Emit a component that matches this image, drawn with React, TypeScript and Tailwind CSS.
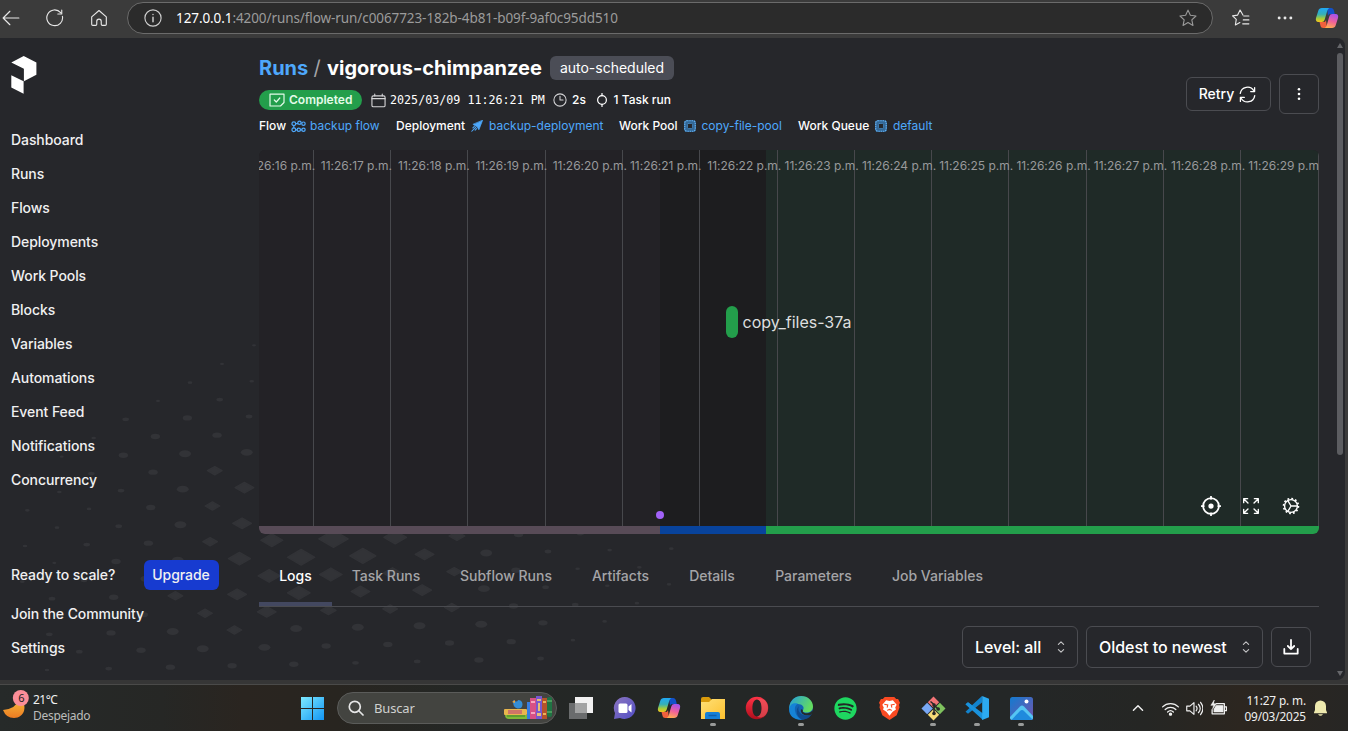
import React from "react";
import { FaSpotify } from "react-icons/fa";

const dotRows: [number, number, number[]][] = [
  [762, 1036, [6]],
  [666, 1092, [6]],
  [570, 1148, [7, 7]],
  [474, 1203, [6, 10]],
  [377, 1258, [10, 14, 10]],
  [281, 1314, [7, 14, 14]],
  [185, 1370, [6, 14, 18, 18]],
  [89, 1425, [5, 10, 14, 24]],
  [178, 1476, [7, 10, 18, 30]],
  [82, 1531, [7, 7, 14, 24]],
  [171, 1583, [7, 10, 18, 30]],
  [75, 1638, [7, 10, 14, 24, 35, 46, 36, 26, 14, 12]],
  [163, 1689, [6, 14, 18, 35, 43, 41, 30, 18, 10, 7, 7]],
  [67, 1745, [7, 10, 16, 24, 35, 36, 30, 24, 14, 7, 7]],
  [156, 1796, [10, 14, 24, 30, 36, 30, 30, 18, 10, 7, 7]],
  [430, 1844, [14, 24, 30, 25, 24, 24, 14, 10, 7]],
  [148, 1903, [10, 14, 18, 24, 18, 18, 18, 18, 14, 7]],
  [238, 1955, [10, 14, 18, 18, 14, 14, 14, 14, 7]],
  [141, 2010, [7, 10, 14, 14, 14, 10, 10, 14, 10]],
];

function Pattern() {
  return (
    <svg className="absolute left-0 top-0" width="700" height="642" viewBox="0 114 2100 1926" fill="#323337">
      {dotRows.map(([x, y, sizes]) =>
        sizes.map((w, i) => {
          const cx = x + i * 185.1;
          const cy = y - i * 4.3;
          if (w < 22) return <ellipse key={cx} cx={cx} cy={cy} rx={w} ry={w * 0.58} />;
          const h = w * 0.6;
          return <path key={cx} strokeLinejoin="round" stroke="#323337" strokeWidth="4" d={`M${cx - w + 2} ${cy}L${cx} ${cy - h + 2}L${cx + w - 2} ${cy}L${cx} ${cy + h - 2}Z`} />;
        }),
      )}
    </svg>
  );
}

type IconProps = { size?: number; sw?: number; className?: string; children: React.ReactNode };
function Icon({ size = 16, sw = 1.2, className = "", children }: IconProps) {
  return (
    <svg width={size} height={size} viewBox="0 0 16 16" fill="none" stroke="currentColor" strokeWidth={sw} strokeLinecap="round" strokeLinejoin="round" className={`shrink-0 ${className}`}>
      {children}
    </svg>
  );
}

function Copilot({ id, size = 24 }: { id: string; size?: number }) {
  return (
    <svg width={size} height={size} viewBox="0 0 24 24" className="shrink-0">
      <defs>
        <linearGradient id={`${id}a`} x1="0" y1="0" x2="0" y2="1">
          <stop offset="0" stopColor="#20a8f4" />
          <stop offset=".45" stopColor="#35b0b8" />
          <stop offset=".75" stopColor="#a5cc3c" />
          <stop offset="1" stopColor="#f7c51c" />
        </linearGradient>
        <linearGradient id={`${id}b`} x1="0.6" y1="0" x2="0.3" y2="1">
          <stop offset="0" stopColor="#a653ec" />
          <stop offset=".5" stopColor="#f0609b" />
          <stop offset="1" stopColor="#ffae50" />
        </linearGradient>
      </defs>
      <path d="M12 2h4.2c1.5 0 2.3 1 2.7 2.3L19.8 8H16c-1.600-.3-2.500.4-3 2z" fill="#1251c9" />
      <path d="M12 22H8.200c-1.500 0-2.300-1-2.700-2.300L4.500 16H8c1.600.3 2.500-.4 3-2z" fill="#f0603c" />
      <path d="M7 2h7.500c-1.300.5-1.800 1.500-2.300 3L9.700 13.500C9.200 15.200 8.200 16 6.700 16H3.500C1 16 .5 14.200 1 12L3.300 4.800C3.800 3 5 2 7 2z" fill={`url(#${id}a)`} />
      <path d="M17 22H9.500c1.300-.5 1.800-1.500 2.300-3l2.500-8.500c.5-1.700 1.500-2.500 3-2.500h3.200c2.500 0 3 1.800 2.500 4l-2.300 7.200C20.200 21 19 22 17 22z" fill={`url(#${id}b)`} />
    </svg>
  );
}

function BrowserBar() {
  return (
    <header className="flex h-[38px] items-start bg-[#3b3b3b] text-[#e8e8e8]">
      <div className="flex h-9 w-[127px] items-center">
        <Icon size={18} sw={1} className="ml-[2px]"><path d="M15 8H1M7 2L1 8l6 6" /></Icon>
        <Icon size={18} sw={1} className="ml-[26px]"><path d="M14.600 6.500A7 7 0 1 1 13 3.200M14 1v3.400h-3.500" /></Icon>
        <Icon size={18} sw={1} className="ml-[26px]"><path d="M1.500 7L8 1.300 14.500 7v6.500q0 1-1 1H11q-1 0-1-1V11q0-2-2-2t-2 2v2.500q0 1-1 1H2.500q-1 0-1-1z" /></Icon>
      </div>
      <div className="mt-[2px] flex h-8 w-[1086px] items-center rounded-full border border-[#6b6b6b] bg-[#2b2b2b]">
        <Icon size={18} sw={1} className="ml-4 text-[#cfcfcf]"><circle cx="8" cy="8" r="7.200" /><path d="M8 7.300v4M8 4.800v.1" strokeWidth="1.300" /></Icon>
        <span className="ml-[14px] font-['Noto_Sans','Open_Sans',sans-serif] text-[13.500px] tracking-[-0.085px] text-[#9b9b9b]"><span className="text-white">127.0.0.1</span>:4200/runs/flow-run/c0067723-182b-4b81-b09f-9af0c95dd510</span>
        <Icon size={18} sw={1} className="ml-auto mr-[15px] text-[#999]"><path d="M8 1l2.100 4.600 5 .6-3.700 3.400 1 5L8 12.100l-4.400 2.500 1-5L.9 6.200l5-.6z" /></Icon>
      </div>
      <div className="flex h-9 flex-1 items-center">
        <Icon size={18} sw={1} className="ml-[19px]"><path d="M9.700 5.400L7.200.9 5 5.400l-4.500.7 3.300 3.200-.8 4.900L7 12M10.500 6.200h4.500M10 9.700h5M9.500 13.200h5.500" /></Icon>
        <Icon size={18} sw={0} className="ml-[26px]"><g fill="currentColor"><circle cx="2.800" cy="8" r="1.300" /><circle cx="8" cy="8" r="1.300" /><circle cx="13.200" cy="8" r="1.300" /></g></Icon>
        <span className="ml-[21px]"><Copilot id="top" size={24} /></span>
      </div>
    </header>
  );
}

const nav = ["Dashboard", "Runs", "Flows", "Deployments", "Work Pools", "Blocks", "Variables", "Automations", "Event Feed", "Notifications", "Concurrency"];

function Sidebar() {
  return (
    <aside className="relative flex w-[259px] shrink-0 flex-col pl-[11px] text-[14px] font-medium tracking-[-0.080px] text-[#f0f0f1]">
      <svg className="mt-[18px]" width="26" height="38" viewBox="0 0 26 38" fill="#fff"><path d="M.3 6.500L12.700.1l12.700 6.400v12.300l-12.500 6.500V12.700zM.3 19.200L12.600 25.300v12.400L.3 31.500z" /></svg>
      <nav className="mt-[29px] flex flex-col">
        {nav.map((n) => <a key={n} className="flex h-[34px] items-center pb-0.5">{n}</a>)}
      </nav>
      <div className="mt-[63px] flex h-[30px] items-center justify-between pr-10">
        <span className="pb-0.5">Ready to scale?</span>
        <button className="h-[30px] w-[75px] rounded-md bg-[#173bd0] pb-0.5 pr-px text-[14px] font-medium">Upgrade</button>
      </div>
      <a className="mt-[7px] flex h-[34px] items-center pb-0.5">Join the Community</a>
      <a className="flex h-[34px] items-center pb-0.5">Settings</a>
    </aside>
  );
}

function Heading() {
  return (
    <div className="flex h-[112px] justify-between">
      <div className="flex flex-col">
        <div className="mt-[18px] flex h-6 items-center text-[20px] font-bold leading-6">
          <span className="w-12 text-[#4ea8fb]">Runs</span>
          <span className="w-5 text-center font-normal text-[#a5a5a8]">/</span>
          <h1 className="w-[223px] whitespace-nowrap">vigorous-chimpanzee</h1>
          <span className="flex h-6 w-[124px] items-center justify-center rounded-md bg-[#4b4d56] text-[14px] font-normal">auto-scheduled</span>
        </div>
        <div className="mt-[10px] flex h-5 items-center text-[12px] font-medium">
          <span className="flex h-5 w-[103px] items-center rounded-full bg-[#239e4b] pl-[10px] font-semibold text-[#e3fbe9]">
            <Icon size={16} sw={1.200} className="mr-1"><path d="M1 2.200h14v8.300L11.500 14H1z" /><path d="M5.300 8l2 2 3.500-4" /></Icon>
            Completed
          </span>
          <Icon size={15} sw={1.200} className="ml-[9px] text-[#d5d5d7]"><rect x="1" y="3" width="14" height="11.700" rx="1.500" /><path d="M1 6h14M4 1.200V3M12 1.200V3" /></Icon>
          <span className="ml-[4px] w-[163px] whitespace-nowrap pt-px font-['DejaVu_Sans_Mono',monospace] text-[11.700px] font-normal">2025/03/09 11:26:21 PM</span>
          <Icon size={14} sw={1.200} className="text-[#d5d5d7]"><circle cx="8" cy="8" r="7" /><path d="M8 3.800V8h3.500" /></Icon>
          <span className="ml-[5px] w-[23px]">2s</span>
          <Icon size={14} sw={1.400}><circle cx="8" cy="8" r="5" /><path d="M8 .5V3M8 13v2.500" /></Icon>
          <span className="ml-[4.500px]">1 Task run</span>
        </div>
        <div className="mt-[6px] flex h-5 items-center text-[12px] font-medium">
          <span className="w-[32px]">Flow</span>
          <Icon size={15} sw={1.300} className="text-[#4ea8fb]"><circle cx="3" cy="5" r="2" /><circle cx="9" cy="4" r="1.800" /><circle cx="13.300" cy="5" r="1.800" /><circle cx="3" cy="11.500" r="2" /><circle cx="8.300" cy="11.500" r="1.800" /><circle cx="13.300" cy="11.500" r="1.800" /><path d="M5 5h2.200M3 7v2.500M5 11.500h1.500M10.200 11.500h1.300" /></Icon>
          <span className="ml-1 w-[86px] font-normal text-[#4ea8fb]">backup flow</span>
          <span className="w-[75px]">Deployment</span>
          <Icon size={12} sw={1} className="text-[#4ea8fb]"><path d="M15.300.7L10.500 13 8.200 9 3 6z" fill="currentColor" /><path d="M6.500 9.500L1 15M4.500 8.500L2.500 10.500M7.500 11.500l-2 2" strokeWidth="1.400" /></Icon>
          <span className="ml-[6px] w-[130px] whitespace-nowrap font-normal text-[#4ea8fb]">backup-deployment</span>
          <span className="w-[65px] whitespace-nowrap">Work Pool</span>
          <Pool />
          <span className="ml-[5.500px] w-[96.500px] whitespace-nowrap font-normal text-[#4ea8fb]">copy-file-pool</span>
          <span className="w-[77px] whitespace-nowrap">Work Queue</span>
          <Pool />
          <span className="ml-[6px] font-normal text-[#4ea8fb]">default</span>
        </div>
      </div>
      <div className="mt-9 flex items-start gap-2">
        <button className="mt-[3px] flex h-[34px] w-[85px] items-center justify-center gap-[5px] rounded-md border border-[#4b4c51] pr-0.5 text-[14px] font-medium"><span className="pb-0.5">Retry</span>
          <Icon size={17} sw={1.200}><path d="M1.200 7A6.900 6.900 0 0 1 14 4.500M14.800 9A6.900 6.900 0 0 1 2 11.500M14.700 1.500v3.700h-3.700M1.300 14.500v-3.700H5" /></Icon>
        </button>
        <button className="flex size-10 items-center justify-center rounded-md border border-[#4b4c51]">
          <Icon size={16} sw={0}><g fill="currentColor"><circle cx="8" cy="3.200" r="1.300" /><circle cx="8" cy="8" r="1.300" /><circle cx="8" cy="12.800" r="1.300" /></g></Icon>
        </button>
      </div>
    </div>
  );
}

function Pool() {
  return <Icon size={12} sw={1.600} className="text-[#62b2f5]"><rect x="1" y="1" width="14" height="14" rx="3" fill="#336796" stroke="#336796" /><rect x="1" y="1" width="14" height="14" rx="3" strokeLinecap="butt" strokeDasharray="2 1" /><rect x="4.700" y="4.700" width="6.600" height="6.600" rx="1" fill="#26272b" stroke="#4a8cc4" strokeWidth="1" /></Icon>;
}

function Timeline() {
  const secs = Array.from({ length: 14 }, (_, i) => 16 + i);
  return (
    <section className="relative flex h-[384px] w-[1060px] flex-col overflow-hidden rounded-md bg-[#232226]">
      <div className="flex h-[376px]">
        <div className="w-[401px] bg-[#232226]" />
        <div className="w-[106px] bg-[#1d1d1f]" />
        <div className="flex-1 bg-[#1f2a27]" />
      </div>
      <div className="flex h-2">
        <div className="w-[401px] bg-[#584b57]" />
        <div className="w-[106px] bg-[#08439c]" />
        <div className="flex-1 bg-[#239e4b]" />
      </div>
      <div className="absolute left-[-22.500px] top-0 flex h-[376px]">
        {secs.map((s) => (
          <div key={s} className="w-[77.300px] shrink-0 whitespace-nowrap border-r border-[#47484c] pt-[9px] text-[12px] leading-[14px] text-[#98999b]">
            <span className="ml-[7px] tracking-[-0.020px]">11:26:{s} p.m.</span>
          </div>
        ))}
      </div>
      <div className="absolute left-[467px] top-[156px] flex items-center text-[16px] text-[#dedfdf]">
        <span className="mr-[4.500px] h-8 w-[12px] rounded-full bg-[#239e4b]" />copy_files-37a
      </div>
      <span className="absolute left-[397px] top-[361px] size-2 rounded-full bg-[#a262f8]" />
      <div className="absolute bottom-[18px] right-[19px] flex items-center text-white">
        <Icon size={20} sw={1.400}><circle cx="8" cy="8" r="6.300" /><circle cx="8" cy="8" r="1.400" fill="currentColor" /><path d="M8 .3v2M8 13.700v2M.3 8h2M13.700 8h2" /></Icon>
        <Icon size={18} sw={1.200} className="ml-[21px]"><path d="M1.500 5V1.500H5M1.500 1.500l3.800 3.800M11 1.500h3.500V5M14.500 1.500l-3.800 3.800M1.500 11v3.500H5M1.500 14.500l3.800-3.800M14.500 11v3.500H11M14.500 14.500l-3.800-3.800" /></Icon>
        <Icon size={18} sw={1.200} className="ml-[22px]"><circle cx="8" cy="8" r="5.700" /><circle cx="8" cy="8" r="6.600" strokeWidth="1.500" strokeDasharray="1.600 1.860" strokeLinecap="butt" /><path d="M8 8h5.500M8 8L5.200 3.200M8 8l-2.800 4.800" /></Icon>
      </div>
    </section>
  );
}

const tabs: [string, string][] = [["Logs", "w-[73px]"], ["Task Runs", "w-[108px]"], ["Subflow Runs", "w-[132px]"], ["Artifacts", "w-[97px]"], ["Details", "w-[86px]"], ["Parameters", "w-[117px]"], ["Job Variables", "w-[131px]"]];

function Updown() {
  return <Icon size={14} sw={1.300} className="text-[#c4c4c6]"><path d="M5 5L8 2.200 11 5M5 11l3 2.800L11 11" /></Icon>;
}

function Tabs() {
  return (
    <>
      <div className="mt-3 flex h-[61px] w-[1060px] border-b border-[#4a4b50] text-[14px] font-medium text-[#a4a4a7]">
        {tabs.map(([t, w], i) => (
          <div key={t} className={`${w} flex h-[60px] items-center justify-center whitespace-nowrap ${i === 0 ? "border-b-4 border-[#434860] pt-0.5 text-white" : "pb-0.5"}`}>{t}</div>
        ))}
      </div>
      <div className="mt-[19px] flex w-[1052px] items-center justify-end gap-2 text-[16px] font-medium tracking-[-0.040px]">
        <div className="flex h-[42px] w-[116px] items-center justify-between whitespace-nowrap rounded-md border border-[#4b4c51] pl-3 pr-[9px]">Level: all<Updown /></div>
        <div className="flex h-[42px] w-[177px] items-center justify-between whitespace-nowrap rounded-md border border-[#4b4c51] pl-3 pr-[9px]">Oldest to newest<Updown /></div>
        <div className="flex size-10 items-center justify-center rounded-md border border-[#4b4c51] pr-px"><Icon size={16} sw={1.800}><path d="M8 1v9M4.800 7L8 10.200 11.200 7M1.300 10v4.600h13.400V10" /></Icon></div>
      </div>
    </>
  );
}

function WindowsLogo() {
  return (
    <svg width="24" height="24" viewBox="0 0 24 24"><defs><linearGradient id="win" x2="1" y2="1"><stop stopColor="#7eeaff" /><stop offset="1" stopColor="#1295f4" /></linearGradient></defs><path fill="url(#win)" d="M1 1h11v11H1zM13 1h11v11H13zM1 13h11v11H1zM13 13h11v11H13z" /></svg>
  );
}

function Books() {
  return (
    <svg width="50" height="24" viewBox="0 0 50 24">
      <path d="M1 19h22v4H5q-4 0-4-4z" fill="#7fb936" /><path d="M3 19.500h18v1H3z" fill="#407f31" />
      <rect y="13" width="23" height="6" rx="1" fill="#e9b64d" /><rect x="4" y="14" width="14" height="4" fill="#cf7567" />
      <path d="M9 4q4 3 5 0 4 0 4.500 4 0 5-5 4.500-5-1-4.500-8.500z" fill="#348ed6" /><path d="M8 6l3-2v3z" fill="#eea43e" />
      <rect x="23" y="6" width="3.500" height="17" fill="#367de0" /><rect x="26" y="2" width="6" height="21" fill="#d74f85" /><rect x="27" y="5" width="4" height="2" fill="#f5a4bf" /><rect x="27" y="16" width="4" height="2" fill="#f5a4bf" />
      <rect x="32" width="6" height="23" fill="#7858d0" /><path d="M33 3h4v2h-4zM33 17h4v3h-4zM34 7h2v8h-2z" fill="#e8bd75" />
      <rect x="38" y="2" width="5" height="21" fill="#b4532b" /><path d="M39 5h3v2h-3zM39 17h3v2h-3z" fill="#edb15a" /><rect x="43" y="1" width="5" height="20" rx="2" fill="#1f7443" /><path d="M43 5h5M43 16h5" stroke="#76c377" />
    </svg>
  );
}

function TaskIcons() {
  const apps: [string, boolean, React.ReactNode][] = [
    ["task", false, <svg width="24" height="24" viewBox="0 0 24 24"><path d="M6 1h18v16H6z" fill="#f1f1f1" /><path d="M0 7h18v16H0z" fill="#6a6c6d" /><path d="M6 7h12v10H6z" fill="#a2a3a3" /></svg>],
    ["chat", false, <svg width="24" height="24" viewBox="0 0 24 24"><defs><linearGradient id="ch" x2="1" y2="1"><stop stopColor="#8b75bf" /><stop offset="1" stopColor="#514dc5" /></linearGradient></defs><path d="M12 1a11 11 0 1 1-5 21L1 23l1-6A11 11 0 0 1 12 1z" fill="url(#ch)" /><rect x="5.500" y="7.500" width="9" height="9.500" rx="1.500" fill="#fff" /><path d="M15.500 10.500l3-2.500v8.500l-3-2.500z" fill="#fff" /></svg>],
    ["copilot", false, <Copilot id="tb" size={24} />],
    ["files", true, <svg width="26" height="24" viewBox="0 0 26 24"><defs><linearGradient id="fo" x2="1" y2="1"><stop stopColor="#ffe077" /><stop offset="1" stopColor="#fcc02e" /></linearGradient></defs><path d="M1 3q0-2 2-2h6l3 3v3H1z" fill="#d99a0b" /><path d="M1 6h8l3-3h13v20H1z" fill="url(#fo)" /><path d="M5 23v-5q0-2 2-2h11q2 0 2 2v5z" fill="#1480d8" /><path d="M8.500 19.500h8" stroke="#0d5fae" strokeWidth="1.500" /></svg>],
    ["opera", false, <svg width="24" height="24" viewBox="0 0 24 24"><defs><linearGradient id="op" x2="0" y2="1"><stop stopColor="#ff3346" /><stop offset="1" stopColor="#b00e1c" /></linearGradient></defs><path fillRule="evenodd" fill="url(#op)" d="M12 .8a11.200 11.200 0 1 0 0 22.400A11.200 11.200 0 0 0 12 .8zM12 3.500c3 0 4.600 4 4.600 8.500s-1.600 8.500-4.600 8.500S7.400 16.500 7.400 12 9 3.500 12 3.500z" /><path d="M12 3.500c4-2 7 .5 8.300 1.200a11 11 0 0 1 0 14.600C17 22 14 22 12 20.500c3 0 4.600-4 4.600-8.500S15 3.500 12 3.500z" fill="#f06a6d" opacity=".5" /></svg>],
    ["edge", true, <svg width="24" height="24" viewBox="0 0 24 24"><defs><linearGradient id="ed" x2="1" y2=".4"><stop stopColor="#249ddc" /><stop offset="1" stopColor="#63dc60" /></linearGradient></defs><circle cx="12" cy="12" r="11.800" fill="#1264b4" /><path d="M.3 11C1 4.500 6 0 12.200 0 19 0 24 5 24 10.500c0 4-3 6-6.500 6-3 0-4.500-1-3.500-2.500 2-3-1-6-5-6C4 8 1 10.500.3 14z" fill="url(#ed)" /><path d="M.2 13C1 8 5 6.500 9 7.800c-3 1.700-3.500 4-3 7C6.600 19 9 22 13 23.800 5 24.500-.5 19 .2 13z" fill="#1683d6" /><path d="M10 10c-2 4 1 9 6 9.500 3 .3 5-.5 7-2-2 4.500-6 6-10 6C7.500 21.500 6 13.500 10 10z" fill="#104b8e" /><path d="M14 14c-1 1.500.5 3.300 4 3.200 2 0 4-1 5-2.500l1 1.500-2 2.500c-6 2-11-1-10-5.500z" fill="#252a2a" /></svg>],
    ["spotify", false, <FaSpotify size={23} color="#1ed760" />],
    ["brave", false, <svg width="21" height="24" viewBox="0 0 22 25"><path d="M6 1h10l2 2h2l2 4-1 2 .5 3-3 8L11 25l-7.500-5-3-8L1 9 0 7l2-4h2z" fill="#fa4a22" /><path d="M7.500 4.500l3.500.7 3.500-.7 4 4.500-1.500 3 .8 2-3.500 2.500L11 20.500 7.700 16.500 4.200 14l.8-2-1.500-3z" fill="#fff" /><path d="M5.500 8.500l3.700.8-.7 2.700M16.500 8.500l-3.700.8.700 2.700M8.500 15l2.500-1 2.500 1" fill="none" stroke="#fa4a22" strokeWidth="1.100" /></svg>],
    ["git", true, <svg width="25" height="25" viewBox="0 0 25 25"><g transform="rotate(45 12.500 12.500)"><rect x="4" y="4" width="8" height="8" fill="#f37476" /><rect x="13" y="4" width="8" height="8" fill="#7fc25e" /><rect x="4" y="13" width="8" height="8" fill="#78a7f4" /><rect x="13" y="13" width="8" height="8" fill="#f6dc77" /></g><path d="M9.500 5.500l3.500 3v10M13 9l4.500 4.500" stroke="#272727" strokeWidth="1.500" fill="none" /><circle cx="13" cy="9" r="1.800" fill="#272727" /><circle cx="17.200" cy="13" r="1.800" fill="#272727" /><circle cx="13" cy="17.500" r="1.800" fill="#272727" /></svg>],
    ["code", true, <svg width="24" height="24" viewBox="0 0 24 24"><path fillRule="evenodd" d="M.5 8.200L3 6.300l4 3L17 0v6.500L3 17.700.5 15.800 4.500 12z" fill="#1283cd" /><path d="M3 6.300L18 17.500V24L.5 8.200z" fill="#1a92dc" /><path d="M17.200 0L24 2.800v18.400L17.200 24V0z" fill="#2caaf0" /></svg>],
    ["photos", true, <svg width="23" height="23" viewBox="0 0 23 23"><defs><linearGradient id="ph" x2="1" y2="1"><stop stopColor="#137bd0" /><stop offset="1" stopColor="#7454ac" /></linearGradient><clipPath id="phc"><rect width="23" height="23" rx="2.500" /></clipPath></defs><g clipPath="url(#phc)"><rect width="23" height="23" fill="url(#ph)" /><path d="M0 20L10 9.500q2-2 4 0L25 21v4H-1z" fill="#55c5f3" /><path d="M1.500 23L10 14q2-2 4 0l9 9z" fill="#1f8add" /><circle cx="16.500" cy="4.500" r="2" fill="#fff" /></g></svg>],
  ];
  return (
    <div className="ml-[2px] flex">
      {apps.map(([k, on, art]) => (
        <div key={k} className="flex w-11 flex-col items-center">
          <span className="mt-2 flex h-[30px] items-center">{art}</span>
          <span className={`h-[3px] w-1.5 rounded-full ${on ? "bg-[#999b9a]" : ""}`} />
        </div>
      ))}
    </div>
  );
}

function Taskbar() {
  return (
    <footer className="flex h-[47px] border-t border-[#4a4a49] bg-[linear-gradient(90deg,#262a29_0%,#262725_12%,#2a2520_18%,#282520_25%,#242725_34%,#242727_75%,#252624_85%,#2c2620_92%,#272624_100%)] font-['Noto_Sans','Open_Sans',sans-serif] text-[12px] text-[#f0f0f0]">
      <div className="flex w-[300px] items-start">
        <svg className="ml-[2px] mt-1" width="28" height="32" viewBox="0 0 28 32"><defs><linearGradient id="moon" x2="0" y2="1"><stop stopColor="#f5be3c" /><stop offset="1" stopColor="#ec7b22" /></linearGradient></defs><path d="M1 21q13-1 17-12c8 7 5 20-6 20q-8 0-11-8z" fill="url(#moon)" /><circle cx="18.800" cy="9" r="8" fill="#fb8e98" /><text x="19.300" y="13" textAnchor="middle" fontSize="11" fill="#222">6</text></svg>
        <div className="ml-[3px] mt-[7px] leading-4 tracking-[-0.500px]"><div>21°C</div><div className="tracking-[-0.300px] text-[#bcbdbb]">Despejado</div></div>
      </div>
      <div className="flex h-[46px] w-[37px] items-center"><WindowsLogo /></div>
      <div className="mt-[7px] flex h-8 w-[220px] items-center rounded-full border border-[#5b5c5a] bg-[#434440] pl-[10px] pr-[2px]">
        <Icon size={16} sw={1.700} className="text-[#e6e6e6]"><circle cx="6.800" cy="6.800" r="5.500" /><path d="M11 11l4 4" /></Icon>
        <span className="ml-[10px] pt-px text-[13px] tracking-[-0.150px] text-[#cfd0cf]">Buscar</span>
        <span className="ml-auto"><Books /></span>
      </div>
      <TaskIcons />
      <div className="ml-auto flex h-[46px] items-center">
        <Icon size={14} sw={1.700} className="mr-[17px]"><path d="M2.800 10.500L8 5.500l5.200 5" /></Icon>
        <Icon size={17} sw={1.200} className="mr-[7px]"><path d="M.6 6.500a10.500 10.500 0 0 1 14.800 0M3 9a7 7 0 0 1 10 0M5.300 11.300a4 4 0 0 1 5.400 0" /><circle cx="8" cy="13.300" r="1" fill="currentColor" /></Icon>
        <Icon size={17} sw={1.100} className="mr-[7px]"><path d="M.7 5.800h3L7.500 2.500v11L3.700 10.200h-3zM9.500 5.800q1.800 2.200 0 4.400M11.700 4q3.400 4 0 8M13.700 2.200q4.400 5.800 0 11.600" /></Icon>
        <Icon size={17} sw={1.200} className="mr-[15px]"><path d="M6 3.500h7.500v9.500H2V9M14 6.500h1.500v3.500H14" /><path d="M6 5.500h6v5.500H4V9z" fill="currentColor" /><path d="M4 0L.8 5h2.500L2.500 8.500 6 3.500H3.500z" fill="currentColor" strokeWidth=".5" /></Icon>
        <div className="w-[64px] whitespace-nowrap text-right text-[11.800px] leading-4 tracking-[-0.120px]"><div>11:27 p. m.</div><div>09/03/2025</div></div>
        <svg className="ml-[7px] mr-5" width="15" height="17" viewBox="0 0 15 17"><path d="M1 12.500L2 10V6a5.500 5.500 0 0 1 11 0v4l1 2.500v.8H1zM5 14.300h5q-2.500 3-5 0z" fill="#eee9ae" /></svg>
      </div>
    </footer>
  );
}

export default function App() {
  return (
    <div className="flex h-[731px] w-[1348px] flex-col overflow-hidden bg-[#3b3b3b] font-['Inter',sans-serif] text-white">
      <BrowserBar />
      <div className="relative flex h-[642px] w-[1345px] overflow-hidden rounded-br-lg rounded-tr-lg bg-[#26272b]">
        <Pattern />
        <Sidebar />
        <main className="relative w-[1060px] shrink-0">
          <Heading />
          <Timeline />
          <Tabs />
        </main>
        <div className="ml-auto mr-[2px] flex w-[6px] flex-col items-center">
          <svg className="mt-[5px]" width="6" height="5" viewBox="0 0 6 5"><path d="M3 0l3 5H0z" fill="#66676b" /></svg>
          <div className="mt-[5px] h-[402px] w-[6px] rounded-full bg-[#5c5d61]" />
          <svg className="mb-[4px] mt-auto" width="6" height="5" viewBox="0 0 6 5"><path d="M0 0h6L3 5z" fill="#66676b" /></svg>
        </div>
      </div>
      <div className="h-1 bg-[#363636]" />
      <Taskbar />
    </div>
  );
}
